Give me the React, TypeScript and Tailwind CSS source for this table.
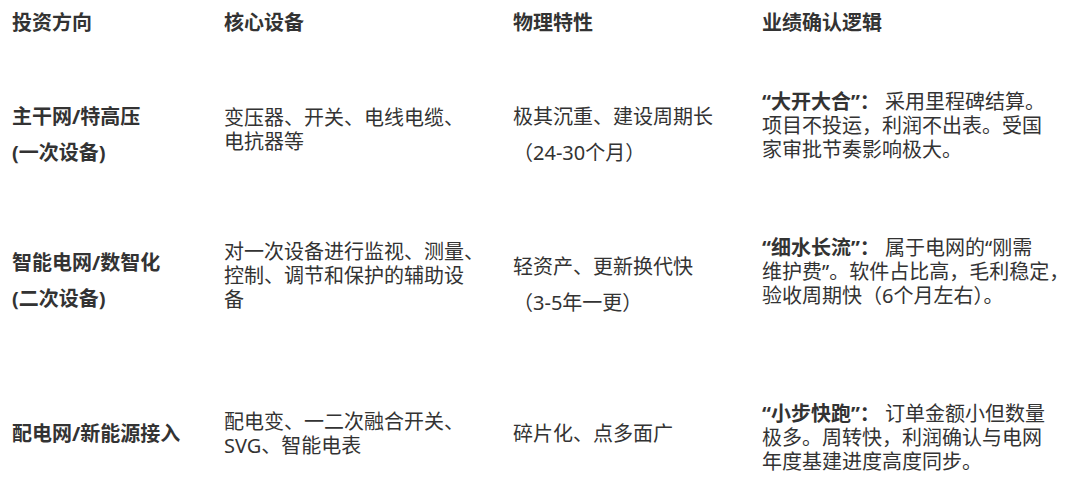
import React from "react";

type Row = {
  h: string;
  c1: React.ReactNode;
  c1cls: string;
  c2: React.ReactNode;
  c2cls: string;
  c3: React.ReactNode;
  c3cls: string;
  c4: React.ReactNode;
  c4cls: string;
};

const rows: Row[] = [
  {
    h: "h-[167px]",
    c1: (
      <>
        主干网/特高压
        <br />
        (一次设备)
      </>
    ),
    c1cls: "mt-[11px]",
    c2: (
      <>
        变压器、开关、电线电缆、
        <br />
        电抗器等
      </>
    ),
    c2cls: "",
    c3: (
      <>
        极其沉重、建设周期长
        <br />
        （24-30个月）
      </>
    ),
    c3cls: "mt-[11px]",
    c4: (
      <>
        <span className="font-bold">“大开大合”：</span> 采用里程碑结算。
        <br />
        项目不投运，利润不出表。受国
        <br />
        家审批节奏影响极大。
      </>
    ),
    c4cls: "mb-[7px]",
  },
  {
    h: "h-[126px]",
    c1: (
      <>
        智能电网/数智化
        <br />
        (二次设备)
      </>
    ),
    c1cls: "mt-[10px]",
    c2: (
      <>
        对一次设备进行监视、测量、
        <br />
        控制、调节和保护的辅助设
        <br />
        备
      </>
    ),
    c2cls: "",
    c3: (
      <>
        轻资产、更新换代快
        <br />
        （3-5年一更）
      </>
    ),
    c3cls: "mt-[17px]",
    c4: (
      <>
        <span className="font-bold">“细水长流”：</span> 属于电网的“刚需
        <br />
        维护费”。软件占比高，毛利稳定，
        <br />
        验收周期快（6个月左右）。
      </>
    ),
    c4cls: "mb-[8px]",
  },
  {
    h: "h-[189px]",
    c1: <>配电网/新能源接入</>,
    c1cls: "",
    c2: (
      <>
        配电变、一二次融合开关、
        <br />
        SVG、智能电表
      </>
    ),
    c2cls: "",
    c3: <>碎片化、点多面广</>,
    c3cls: "",
    c4: (
      <>
        <span className="font-bold">“小步快跑”：</span> 订单金额小但数量
        <br />
        极多。周转快，利润确认与电网
        <br />
        年度基建进度高度同步。
      </>
    ),
    c4cls: "mt-[8px]",
  },
];

export default function App() {
  return (
    <div
      className="h-[487px] w-[1080px] overflow-hidden bg-white text-[20px] text-[#333333]"
      style={{ fontFamily: '"Noto Sans", "Noto Sans CJK SC", sans-serif' }}
    >
      <div className="grid grid-cols-[212px_289px_249px_1fr] pl-[12px]">
        <div className="flex h-[46px] items-center font-bold">投资方向</div>
        <div className="flex h-[46px] items-center font-bold">核心设备</div>
        <div className="flex h-[46px] items-center font-bold">物理特性</div>
        <div className="flex h-[46px] items-center font-bold">业绩确认逻辑</div>
        {rows.map((r, i) => (
          <React.Fragment key={i}>
            <div className={`flex items-center ${r.h}`}>
              <div className={`whitespace-nowrap font-bold leading-[36px] ${r.c1cls}`}>{r.c1}</div>
            </div>
            <div className={`flex items-center ${r.h}`}>
              <div className={`whitespace-nowrap leading-[24px] ${r.c2cls}`}>{r.c2}</div>
            </div>
            <div className={`flex items-center ${r.h}`}>
              <div className={`whitespace-nowrap leading-[36px] ${r.c3cls}`}>{r.c3}</div>
            </div>
            <div className={`flex items-center ${r.h}`}>
              <div className={`whitespace-nowrap leading-[24px] ${r.c4cls}`}>{r.c4}</div>
            </div>
          </React.Fragment>
        ))}
      </div>
    </div>
  );
}
